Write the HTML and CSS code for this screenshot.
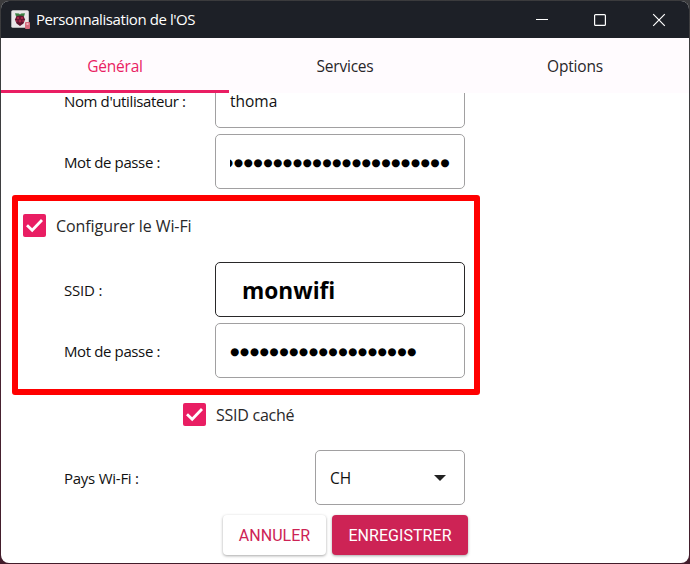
FILE: index.html
```html
<!DOCTYPE html>
<html lang="fr">
<head>
<meta charset="utf-8">
<title>Personnalisation de l'OS</title>
<link rel="stylesheet" href="styles.css">
</head>
<body>
<div class="window">
  <header class="titlebar">
    <svg class="app-icon" width="19" height="19" viewBox="0 0 19 19">
      <rect x="0.3" y="0.2" width="17.5" height="17.5" rx="1.5" fill="#e9e6e8"/>
      <path d="M4 3.2 L8 3.5 L9 4.5 L10 3.5 L14 3.2 L13 6.5 L9 7 L5 6.5Z" fill="#397f42"/>
      <path d="M5.5 6 L9 5.5 L12.5 6 L14 9.5 L12.5 13.5 L9 16 L5.5 13.5 L4 9.5Z" fill="#5d152e"/>
      <g fill="#a52649"><circle cx="7" cy="8" r="1.3"/><circle cx="11" cy="8" r="1.3"/><circle cx="9" cy="11" r="1.5"/><circle cx="5.7" cy="11" r="1"/><circle cx="12.2" cy="11" r="1"/></g>
      <rect x="14" y="12" width="5" height="7" rx="1" fill="#d56c7e"/>
      <rect x="15.5" y="13" width="2" height="2" fill="#f1b3bd"/>
    </svg>
    <span class="title">Personnalisation de l'OS</span>
    <svg class="controls" width="132" height="14" viewBox="0 0 132 14" fill="none" stroke="#fff" stroke-width="1.2">
      <path d="M0 6.5H12"/>
      <rect x="58.6" y="1.6" width="10.8" height="10.8" rx="1"/>
      <path d="M117.2 1.2L128.8 12.8M128.8 1.2L117.2 12.8"/>
    </svg>
  </header>
  <nav class="tabs">
    <div class="tab active"><span>Général</span></div>
    <div class="tab"><span>Services</span></div>
    <div class="tab"><span>Options</span></div>
  </nav>
  <main class="content">
    <div class="row first"><label>Nom d'utilisateur :</label><div class="field"><span class="value">thoma</span></div></div>
    <div class="row"><label>Mot de passe :</label><div class="field"><div class="clip"><span class="dots">●●●●●●●●●●●●●●●●●●●●●●●</span></div></div></div>
    <section class="highlight">
      <div class="check"><svg class="box" viewBox="0 0 23 23"><path d="M4 11.2L9.2 16.3L19 6"/></svg><span>Configurer le Wi-Fi</span></div>
      <div class="row"><label class="short">SSID :</label><div class="field focus"><b>monwifi</b></div></div>
      <div class="row"><label>Mot de passe :</label><div class="field"><span class="dots">●●●●●●●●●●●●●●●●●●●</span></div></div>
    </section>
    <div class="check hidden-ssid"><svg class="box" viewBox="0 0 23 23"><path d="M4 11.2L9.2 16.3L19 6"/></svg><span>SSID caché</span></div>
    <div class="row country"><label>Pays Wi-Fi :</label><div class="field select"><span class="value">CH</span><i class="arrow"></i></div></div>
    <footer class="actions"><button class="cancel">ANNULER</button><button class="save">ENREGISTRER</button></footer>
  </main>
</div>
</body>
</html>
```
FILE: styles.css
```css
* { box-sizing: border-box; }
body {
  margin: 0;
  width: 690px;
  height: 564px;
  overflow: hidden;
  padding: 1px;
  background: linear-gradient(#3b3b3d 0, #414143 260px, #4b2634 280px, #421d2b 100%);
  font-family: "Open Sans", "Noto Sans", sans-serif;
  font-size: 15px;
  color: #111;
}
.window {
  width: 688px;
  height: 562px;
  border-radius: 8px;
  overflow: hidden;
  background: #fff;
  display: flex;
  flex-direction: column;
}
.titlebar {
  height: 37px;
  flex: none;
  background: #1d2027;
  color: #fff;
  display: flex;
  align-items: center;
  padding-left: 10px;
}
.title { margin: -1px 0 0 6px; font-size: 15px; letter-spacing: -0.42px; white-space: nowrap; }
.controls { margin-left: auto; margin-right: 21px; }
.tabs {
  display: grid;
  grid-template-columns: 228px 232px 228px;
  height: 55px;
  flex: none;
  background: #fffbfe;
  color: #292629;
  font-size: 15.5px;
  letter-spacing: -0.2px;
}
.tab { display: flex; align-items: center; justify-content: center; padding-top: 3px; border-bottom: 3px solid transparent; }
.tab.active { color: #e91e63; border-color: #e91e63; }
.content { flex: 1; overflow: hidden; padding-left: 11px; }
.row { display: flex; align-items: center; height: 55px; margin-top: 6px; padding-left: 52px; }
.row.first { margin-top: -20px; }
.row label { width: 151px; flex: none; padding-top: 1px; font-size: 15px; white-space: nowrap; letter-spacing: -0.38px; }
.row label.short { letter-spacing: -0.2px; }
.field {
  width: 250px;
  height: 55px;
  border: 1.5px solid #a1a0a1;
  border-radius: 5px;
  padding-left: 14px;
  display: flex;
  align-items: center;
  white-space: nowrap;
}
.field.focus { border-color: #292829; }
.value { font-size: 15.5px; }
.field b { margin: 2px 0 0 12px; font-size: 22.7px; color: #000; }
.clip { width: 220px; overflow: hidden; display: flex; justify-content: flex-end; }
.dots { font: 10.5px/16px "DejaVu Sans", sans-serif; letter-spacing: 0.67px; color: #000; padding-top: 1px; }
.highlight { width: 468px; height: 200px; margin-top: 6px; border: 6px solid #f00; border-radius: 3px; padding: 13px 0 0 5px; }
.highlight .row { padding-left: 41px; }
.highlight .check + .row { margin-top: 25px; }
.check { display: flex; align-items: center; height: 23px; color: #292829; white-space: nowrap; }
.check span { margin-left: 10px; font-size: 16px; letter-spacing: -0.08px; }
.box { width: 23px; height: 23px; flex: none; background: #e91e63; border-radius: 2px; fill: none; stroke: #fff; stroke-width: 2.8; }
.hidden-ssid { margin: 8px 0 0 171px; }
.hidden-ssid span { letter-spacing: -0.25px; }
.row.country { margin-top: 24px; }
.row.country label { width: 251px; letter-spacing: -0.25px; }
.field.select { width: 150px; }
.arrow { margin-left: auto; margin-right: 18px; border: 6px solid transparent; border-top-color: #222; border-bottom: 0; }
.actions { display: flex; gap: 6px; margin: 10px 0 0 211px; }
button { height: 40px; padding: 0; border: 0; border-radius: 4px; font: 16px Roboto, sans-serif; letter-spacing: 0.05px; box-shadow: 0 1px 3px rgba(0,0,0,.35); }
.cancel { width: 103px; background: #fff; color: #cd2355; }
.save { width: 136px; background: #cd2355; color: #fff; }
```
